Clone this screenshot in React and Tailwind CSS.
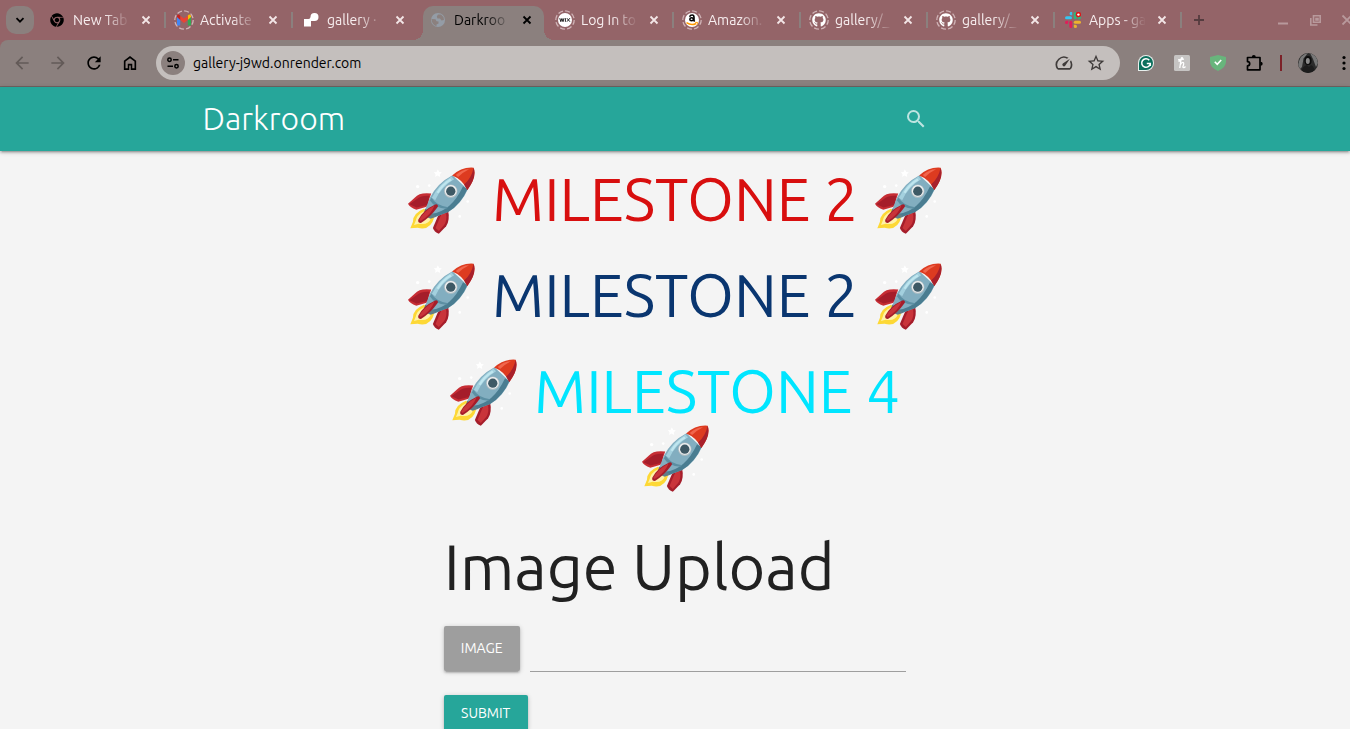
import React from 'react';
import { FaChrome, FaGithub } from 'react-icons/fa';
import {
  MdArrowBack,
  MdArrowForward,
  MdOutlineSpeed,
  MdRefresh,
  MdSearch,
  MdStarBorder,
} from 'react-icons/md';

function SleepingRing({ children }) {
  return (
    <span className="relative flex size-5 items-center justify-center">
      <svg className="absolute inset-0" viewBox="0 0 20 20" fill="none" aria-hidden="true">
        <circle cx="10" cy="10" r="9.2" stroke="#d0b4b7" strokeWidth="1.3" strokeDasharray="5 2.2" />
      </svg>
      {children}
    </span>
  );
}

function GmailIcon() {
  return (
    <svg className="relative size-3.5" viewBox="0 0 24 24" aria-hidden="true">
      <path d="M1 21.500h4.500V11L0 6.500v13.500Q0 21.500 1 21.500z" fill="#4285f4" />
      <path d="M18.500 21.500H23q1 0 1-1.500V6.500L18.500 11z" fill="#34a853" />
      <path d="M18.500 4.500V12L24 7V5q-1-3-4-2z" fill="#fbbc04" />
      <path d="M5.500 12V4.500l6.500 5 6.500-5V12L12 17z" fill="#ea4335" />
      <path d="M0 5v2l5.500 5V4.500L4 3Q1 2 0 5z" fill="#c5221f" />
    </svg>
  );
}

function RenderIcon() {
  return (
    <svg className="size-4" viewBox="0 0 16 16" fill="#fff" aria-hidden="true">
      <path d="M1 7h4.500q1.800 0 2-2A4 4 0 1 1 11.500 9H8v5.500H1z" />
    </svg>
  );
}

function GlobeIcon() {
  return (
    <svg className="size-4" viewBox="0 0 16 16" aria-hidden="true">
      <circle cx="8" cy="8" r="7" fill="#949ca6" />
      <path d="M1.500 7l4 .3 1 2 2 .2v2l-2 1v1.800Q2 13 1.500 7zM8 2.500h3l2.500 2.500.5 3-2.500.5-1.500-2H7.500L6.800 4.500z" fill="#8b807e" />
    </svg>
  );
}

function WixIcon() {
  return (
    <svg className="relative size-3.5" viewBox="0 0 14 14" aria-hidden="true">
      <circle cx="7" cy="7" r="7" fill="#fff" />
      <path d="M1.800 5.200l1 3.500 1.100-3.200L5 8.700l1-3.500M7.400 5.200v3.600M8.900 5.200l3 3.500M11.900 5.200l-3 3.500" fill="none" stroke="#222" strokeWidth="1" />
    </svg>
  );
}

function AmazonIcon() {
  return (
    <svg className="relative size-3.5" viewBox="0 0 14 14" aria-hidden="true">
      <circle cx="7" cy="7" r="7" fill="#fff" />
      <path d="M4.600 3.700Q5.200 2 7.100 2t1.900 2.200v3.500l.7.900" fill="none" stroke="#000" strokeWidth="1.600" />
      <ellipse cx="6.600" cy="6.300" rx="1.800" ry="1.500" fill="none" stroke="#000" strokeWidth="1.500" />
      <path d="M1.500 9.700Q6.500 13 11 10.500" fill="none" stroke="#ff9900" strokeWidth="1.500" />
      <path d="M10.200 9.400h2.300l-.5 2.300" fill="none" stroke="#ff9900" strokeWidth="1" />
    </svg>
  );
}

function GithubIcon() {
  return <FaGithub className="relative size-3.5 text-white" aria-hidden="true" />;
}

function SlackIcon() {
  return (
    <svg className="size-4" viewBox="0 0 16 16" aria-hidden="true">
      <g fill="#36c5f0">
        <rect x="0" y="4.300" width="7" height="3" rx="1.500" />
        <path d="M7.200 0v3.200H5.600A1.600 1.600 0 1 1 7.200 0z" />
      </g>
      <g fill="#2eb67d">
        <rect x="8.700" y="0" width="3" height="7.200" rx="1.500" />
        <path d="M12.800 7.200V5.600a1.600 1.600 0 1 1 1.600 1.600z" />
      </g>
      <g fill="#e01e5a">
        <rect x="4.300" y="8.800" width="3" height="7.200" rx="1.500" />
        <path d="M3.200 8.800v1.600a1.600 1.600 0 1 1-1.600-1.600z" />
      </g>
      <g fill="#ecb22e">
        <rect x="8.800" y="8.800" width="7.200" height="3" rx="1.500" />
        <path d="M8.800 12.800h1.600a1.600 1.600 0 1 1-1.600 1.600z" />
      </g>
      <circle cx="13.400" cy="2.600" r="2.700" fill="#e01414" />
      <circle cx="13.400" cy="2.600" r="1.200" fill="#fff" />
    </svg>
  );
}

const tabs = [
  { title: 'New Tab', icon: <FaChrome className="size-3.5 text-black" aria-hidden="true" /> },
  { title: 'Activate', icon: <SleepingRing><GmailIcon /></SleepingRing> },
  { title: 'gallery ·', icon: <RenderIcon />, beforeActive: true },
  { title: 'Darkroo', icon: <GlobeIcon />, active: true },
  { title: 'Log In to', icon: <SleepingRing><WixIcon /></SleepingRing> },
  { title: 'Amazon.', icon: <SleepingRing><AmazonIcon /></SleepingRing> },
  { title: 'gallery/_', icon: <SleepingRing><GithubIcon /></SleepingRing> },
  { title: 'gallery/_', icon: <SleepingRing><GithubIcon /></SleepingRing> },
  { title: 'Apps - ga', icon: <SlackIcon /> },
];

function Tab({ tab }) {
  return (
    <div className="relative flex h-10 w-[127px] shrink-0 items-center pl-[7px]">
      {tab.active && (
        <>
          <span className="absolute top-1.5 right-1 bottom-0 left-0.5 rounded-t-[10px] bg-[#8b807e]" />
          <span className="absolute bottom-0 -left-2 size-2.5 bg-[radial-gradient(circle_at_0_0,transparent_10px,#8b807e_10px)]" />
          <span className="absolute -right-1.5 bottom-0 size-2.5 bg-[radial-gradient(circle_at_100%_0,transparent_10px,#8b807e_10px)]" />
        </>
      )}
      <a
        href="#"
        className={`relative flex items-center gap-1.5 ${tab.active ? 'text-black' : 'text-[#f7eeef]'}`}
      >
        <span className="flex size-5 items-center justify-center">{tab.icon}</span>
        <span className="w-[57px] text-[14px] leading-5 whitespace-nowrap [mask-image:linear-gradient(to_right,#000_55%,transparent)]">
          {tab.title}
        </span>
      </a>
      <button
        type="button"
        aria-label="Close tab"
        className={`relative ml-2 flex size-4 items-center justify-center ${tab.active ? 'text-black' : 'text-[#f3e6e7]'}`}
      >
        <svg className="size-2.5" viewBox="0 0 10 10" fill="none" stroke="currentColor" strokeWidth="1.800">
          <path d="M1.500 1.500l7 7M8.500 1.500l-7 7" />
        </svg>
      </button>
      {!tab.active && (
        <span className="absolute right-px h-4 w-0.5 bg-[#8b807e]" hidden={tab.beforeActive} />
      )}
    </div>
  );
}

function TabStrip() {
  return (
    <div className="flex h-10 items-center overflow-hidden bg-[#946468]">
      <button
        type="button"
        aria-label="Search tabs"
        className="mx-1.5 flex size-7 shrink-0 items-center justify-center rounded-[10px] bg-[#8b807e]"
      >
        <svg className="size-2.5" viewBox="0 0 10 10" fill="none" stroke="#000" strokeWidth="1.800">
          <path d="M1.500 3.200L5 6.700l3.500-3.500" />
        </svg>
      </button>
      {tabs.map((tab, index) => (
        <Tab key={index} tab={tab} />
      ))}
      <button type="button" aria-label="New tab" className="ml-1.5 flex size-5 shrink-0 items-center justify-center">
        <svg className="size-3" viewBox="0 0 12 12" fill="none" stroke="#553c3f" strokeWidth="1.800">
          <path d="M6 1v10M1 6h10" />
        </svg>
      </button>
      <div className="-mr-[5px] ml-auto flex shrink-0 gap-4 text-[#b8999c]">
        <button type="button" aria-label="Minimize" className="size-4">
          <svg viewBox="0 0 16 16" fill="currentColor"><path d="M3 10.500h10v2H3z" /></svg>
        </button>
        <button type="button" aria-label="Restore" className="size-4">
          <svg viewBox="0 0 16 16" fill="none" stroke="currentColor" strokeWidth="1.600">
            <path d="M6.500 3.800h6.700v6.400H6.500zM3.800 6v7h6.700" />
            <path d="M9 6.500h2v1.500H9z" />
          </svg>
        </button>
        <button type="button" aria-label="Close" className="size-4">
          <svg viewBox="0 0 16 16" fill="none" stroke="currentColor" strokeWidth="1.800">
            <path d="M3.500 3.500l9 9M12.500 3.500l-9 9" />
          </svg>
        </button>
      </div>
    </div>
  );
}

function Toolbar() {
  return (
    <div className="bg-[#946468]">
      <div className="flex h-[47px] items-center rounded-tl-lg border-b border-[#716462] bg-[#8b807e] pb-px">
        <div className="flex w-[156px] shrink-0 items-center gap-4 pl-3">
          <button type="button" aria-label="Back" className="text-[#635a58]"><MdArrowBack className="size-5" /></button>
          <button type="button" aria-label="Forward" className="text-[#635a58]"><MdArrowForward className="size-5" /></button>
          <button type="button" aria-label="Reload"><MdRefresh className="size-5" /></button>
          <button type="button" aria-label="Home" className="flex size-5 items-center justify-center">
            <svg className="size-[18px]" viewBox="0 0 24 24">
              <path d="M6 19h3v-6h6v6h3v-9l-6-4.500L6 10v9Zm-2.200 2.200V8.900L12 2.700l8.200 6.200v12.300h-7.200v-6h-2v6H3.800Z" />
            </svg>
          </button>
        </div>
        <div className="flex h-[34px] min-w-0 flex-1 items-center rounded-full bg-[#c4bfbd] pr-3.5 pl-[5px]">
          <button
            type="button"
            aria-label="View site information"
            className="mr-2 flex size-6 shrink-0 items-center justify-center rounded-full bg-[#8b807e]"
          >
            <svg className="size-3.5" viewBox="0 0 14 14" fill="none" stroke="#000" strokeWidth="1.500">
              <circle cx="3.500" cy="3.700" r="1.700" />
              <path d="M7 3.700h5.500M1.500 10.300H7" />
              <circle cx="10.500" cy="10.300" r="1.700" />
            </svg>
          </button>
          <input
            type="text"
            aria-label="Address"
            defaultValue="gallery-j9wd.onrender.com"
            className="min-w-0 flex-1 bg-transparent pt-0.5 text-[14px] text-black outline-none"
          />
          <div className="flex gap-3 text-[#3f3b3a]">
            <button type="button" aria-label="Performance"><MdOutlineSpeed className="size-5" /></button>
            <button type="button" aria-label="Bookmark this page"><MdStarBorder className="size-5" /></button>
          </div>
        </div>
        <div className="-mr-1 flex w-[234px] shrink-0 items-center pl-[18px]">
          <button type="button" aria-label="Grammarly" className="mr-5">
            <svg className="size-4" viewBox="0 0 16 16">
              <path d="M8 0a8 8 0 0 1 0 16H0V8a8 8 0 0 1 8-8z" fill="#e8f0ee" />
              <path d="M8 1a7 7 0 0 1 0 14H1V8a7 7 0 0 1 7-7z" fill="#0b6f5c" />
              <path d="M11.300 5.200A4.300 4.300 0 1 0 12.300 8.500H8.800M12.300 8.500v2.500" fill="none" stroke="#fff" strokeWidth="1.500" />
            </svg>
          </button>
          <button type="button" aria-label="Honey" className="mr-5">
            <svg className="size-4" viewBox="0 0 16 16">
              <rect width="16" height="16" rx="1.500" fill="#c6c4c3" />
              <path d="M4.500 6.500Q9 5 8.500 3q-1-1.200-1.500 1.500L5.800 13M6.200 10Q8 7 9.200 7.500T8.800 12q.7 1.500 2.700-.5M4 4.800l6-.6" fill="none" stroke="#fff" strokeWidth="1.300" />
            </svg>
          </button>
          <button type="button" aria-label="Ad blocker" className="mr-[18px]">
            <svg className="size-4" viewBox="0 0 16 16">
              <path d="M8 0l8 2v4.500q0 6-8 9.500-8-3.500-8-9.500V2z" fill="#68b57c" />
              <path d="M4.800 6.800l2.400 2.500 4-4.300" fill="none" stroke="#fff" strokeWidth="1.600" />
            </svg>
          </button>
          <button type="button" aria-label="Extensions" className="mr-4 flex size-5 items-center justify-center">
            <svg className="size-[18px]" viewBox="0 0 18 18">
              <path d="M2.500 3.500H15v12.300H2.500v-4q2.200 0 2.200-2t-2.200-2.100z" fill="none" stroke="#000" strokeWidth="1.700" strokeLinejoin="round" />
              <path d="M6.800 3.200a2 2.200 0 0 1 4 0zM15.500 7.700a2.200 2 0 0 1 0 4z" />
            </svg>
          </button>
          <span className="mr-4 h-4 w-0.5 bg-[#7c2128]" />
          <button type="button" aria-label="Profile" className="mr-[18px]">
            <svg className="size-5 rounded-full" viewBox="0 0 20 20">
              <rect width="20" height="20" fill="#2b2b2b" />
              <path d="M0 12Q2 1 10 0L5.500 5.500 4 14l-2 2zM12 0q7 2 8 10l-2 4-3-8z" fill="#777" />
              <ellipse cx="10" cy="7.500" rx="3.600" ry="4.500" fill="#0c0c0c" />
              <ellipse cx="9.800" cy="8" rx="2" ry="3" fill="#8a8a8a" />
              <path d="M3 20q1-7 6-8l2 2 2-2q4 2 4 8z" fill="#1c1c1c" />
            </svg>
          </button>
          <button type="button" aria-label="Menu">
            <svg className="size-4" viewBox="0 0 16 16">
              <circle cx="8" cy="2.500" r="1.600" />
              <circle cx="8" cy="8" r="1.600" />
              <circle cx="8" cy="13.500" r="1.600" />
            </svg>
          </button>
        </div>
      </div>
    </div>
  );
}

function Rocket() {
  return (
    <svg className="-mb-px size-[67px] shrink-0" viewBox="24 37 202 202" role="img" aria-label="rocket">
      <g fill="#fff">
        <path d="M114 44l4 8 8 1-6 6 1 8-8-4-7 4 1-8-5-6 8-1z" />
        <circle cx="53" cy="96" r="5" />
        <circle cx="88" cy="93" r="4" />
        <circle cx="204" cy="141" r="4" />
        <circle cx="180" cy="186" r="4" />
      </g>
      <path d="M72 163Q38 177 39 202l-8 20 22-2q39 11 51-34z" fill="#fdd835" />
      <path d="M72 171Q50 181 47 200l-5 12 14-4q29 6 38-18z" fill="#fff2a8" />
      <path d="M94 117Q58 113 45 129L24 148q5 11 25 18l31-9z" fill="#c62d34" />
      <path d="M88 124Q62 123 52 133L28 149l22 10 34-8z" fill="#a51d2a" />
      <path d="M145 168q6 29-6 48l-22 22q-14-5-18-17l16-38z" fill="#a51d2a" />
      <path d="M139 176q3 24-6 36l-16 18-10-9 18-43z" fill="#c9343a" />
      <path d="M158 62Q112 86 90 130L76 166l31 21 38-14q40-24 59-68z" fill="#82aec0" />
      <path d="M203 104q-19 44-58 69l-38 14-13-9q60-6 96-83z" fill="#4a7d91" />
      <path d="M155 66Q116 90 96 130l10 7q19-41 57-63z" fill="#a3d0de" />
      <path d="M151 72q-27 17-41 41l6 3q16-26 40-39z" fill="#bfe6ef" />
      <path d="M95 130q14 24 50 28l-5 5q-36-2-50-26z" fill="#5c8fa3" />
      <path d="M76 162l-6 21 22 10 18-6z" fill="#607e89" />
      <path d="M157 63q28-27 65-24 10 29-19 67-16-32-46-43z" fill="#dd3b20" />
      <path d="M222 39q10 29-19 67l-10-16q22-19 29-51z" fill="#a8202b" />
      <path d="M168 61q19-17 40-17-18 9-33 23z" fill="#f1664d" />
      <circle cx="153" cy="110" r="20" fill="#b7c1c5" />
      <circle cx="153" cy="109" r="18" fill="#eef1f2" />
      <circle cx="153" cy="110" r="14" fill="#3e5965" />
      <path d="M106 150q10-3 8 7-22 31-51 49-10 0-8-10 14-29 51-46z" fill="#a51d2a" />
      <path d="M104 153q-32 17-46 43l4 4q31-18 42-47z" fill="#c9343a" />
    </svg>
  );
}

function Milestone({ color, wrap, children }) {
  return (
    <h2
      className={`flex items-center justify-center gap-x-[17px] text-[60px] leading-[64px] whitespace-nowrap ${
        wrap ? 'flex-wrap' : ''
      } ${color}`}
    >
      <Rocket />
      <span className="h-[66px]">{children}</span>
      <Rocket />
    </h2>
  );
}

const raised =
  'shadow-[0_2px_2px_0_rgba(0,0,0,0.14),0_3px_1px_-2px_rgba(0,0,0,0.12),0_1px_5px_0_rgba(0,0,0,0.2)]';

export default function App() {
  return (
    <div className="flex h-screen flex-col overflow-hidden bg-[#f4f4f4] font-['Ubuntu','Open_Sans',sans-serif]">
      <header>
        <TabStrip />
        <Toolbar />
      </header>
      <nav className={`z-10 shrink-0 bg-[#26a69a] text-white ${raised}`}>
        <div className="mx-auto flex h-16 w-[70%] items-center justify-between">
          <a href="#" className="pb-0.5 text-[32px] font-light">Darkroom</a>
          <form className="w-[25.8%]" onSubmit={(event) => event.preventDefault()}>
            <button type="submit" aria-label="Search" className="flex text-white/70">
              <MdSearch className="size-6" />
            </button>
          </form>
        </div>
      </nav>
      <main className="min-h-0 flex-1 overflow-hidden">
        <div className="mx-auto w-[70%] pt-4">
          <div className="mx-auto w-1/2 px-[5px]">
            <div className="flex flex-col gap-[30px]">
              <Milestone color="text-[#d80f0f]">MILESTONE 2</Milestone>
              <Milestone color="text-[#0a3670]">MILESTONE 2</Milestone>
              <Milestone color="text-[#00e5ff]" wrap>MILESTONE 4</Milestone>
            </div>
            <h1 className="mt-[41px] text-[63px] leading-[70px] whitespace-nowrap text-[#212121]">
              Image Upload
            </h1>
            <form className="mt-6" onSubmit={(event) => event.preventDefault()}>
              <div className="flex gap-2.5">
                <label
                  className={`flex h-[45px] w-[76px] shrink-0 items-center justify-center rounded-xs bg-[#9e9e9e] text-[14px] text-white uppercase ${raised}`}
                >
                  Image
                  <input type="file" className="sr-only" />
                </label>
                <input
                  type="text"
                  aria-label="Image file name"
                  readOnly
                  className="h-[46px] min-w-0 flex-1 border-b border-[#9e9e9e] bg-transparent outline-none"
                />
              </div>
              <button
                type="submit"
                className={`mt-[23px] h-9 w-[84px] rounded-xs bg-[#26a69a] text-[14px] text-white uppercase ${raised}`}
              >
                Submit
              </button>
            </form>
          </div>
        </div>
      </main>
    </div>
  );
}
